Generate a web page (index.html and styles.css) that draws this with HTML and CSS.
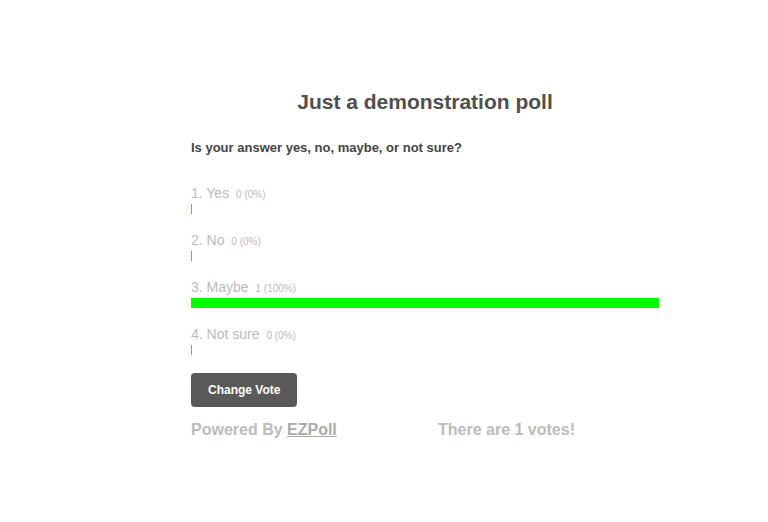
FILE: index.html
```html
<!DOCTYPE html>
<html>
<head>
<meta charset="utf-8">
<link rel="stylesheet" href="styles.css">
</head>
<body>
<div class="poll">
  <h1 class="title">Just a demonstration poll</h1>
  <p class="question">Is your answer yes, no, maybe, or not sure?</p>
  <ul class="options">
    <li class="option">
      <div class="label">1. Yes <span class="count">0 (0%)</span></div>
      <div class="bar" style="width:1px"></div>
    </li>
    <li class="option">
      <div class="label">2. No <span class="count">0 (0%)</span></div>
      <div class="bar" style="width:1px"></div>
    </li>
    <li class="option">
      <div class="label">3. Maybe <span class="count">1 (100%)</span></div>
      <div class="bar" style="width:100%"></div>
    </li>
    <li class="option">
      <div class="label">4. Not sure <span class="count">0 (0%)</span></div>
      <div class="bar" style="width:1px"></div>
    </li>
  </ul>
  <button class="btn">Change Vote</button>
  <div class="footer">
    <span class="powered">Powered By <a href="#">EZPoll</a></span>
    <span class="votes">There are 1 votes!</span>
  </div>
</div>
</body>
</html>
```
FILE: styles.css
```css
html, body {
  margin: 0;
  padding: 0;
  background: #fff;
}
body {
  font-family: "Liberation Sans", Arial, sans-serif;
}
.poll {
  width: 468px;
  margin-left: 191px;
  padding-top: 90px;
}
.title {
  margin: 0;
  font-size: 21px;
  line-height: 24px;
  font-weight: bold;
  text-align: center;
  color: #4f4f4f;
}
.question {
  margin: 26px 0 0;
  font-size: 13px;
  line-height: 16px;
  font-weight: bold;
  color: #444;
}
.options {
  list-style: none;
  margin: 29px 0 0;
  padding: 0;
}
.option {
  height: 47px;
}
.label {
  font-size: 14px;
  line-height: 17px;
  color: #bbb;
}
.count {
  font-size: 10px;
  margin-left: 3px;
}
.bar {
  height: 10px;
  margin-top: 1px;
  background: #00ff00;
}
.btn {
  display: block;
  margin-top: 0;
  height: 34px;
  padding: 0 17px;
  border: none;
  border-radius: 4px;
  background: #595959;
  color: #fff;
  font-family: "Liberation Sans", Arial, sans-serif;
  font-size: 12px;
  font-weight: bold;
}
.footer {
  display: grid;
  grid-template-columns: 247px auto;
  margin-top: 13px;
  font-size: 16px;
  line-height: 19px;
  font-weight: bold;
  color: #bbb;
}
.footer a {
  color: #aaa;
}
```
